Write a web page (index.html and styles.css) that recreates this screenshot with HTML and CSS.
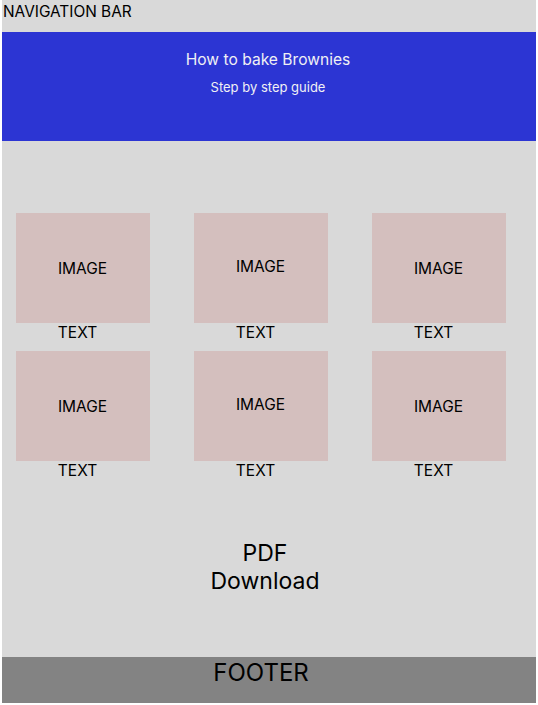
FILE: index.html
```html
<!DOCTYPE html>
<html lang="en">
<head>
<meta charset="utf-8">
<title>How to bake Brownies</title>
<link rel="stylesheet" href="styles.css">
</head>
<body>
<div class="frame">
  <nav class="nav">NAVIGATION BAR</nav>
  <header class="hero">
    <h1 class="hero-title">How to bake Brownies</h1>
    <p class="hero-sub">Step by step guide</p>
  </header>
  <main class="main">
    <div class="grid">
      <div class="cell"><div class="img">IMAGE</div><div class="label">TEXT</div></div>
      <div class="cell"><div class="img img-up">IMAGE</div><div class="label">TEXT</div></div>
      <div class="cell"><div class="img">IMAGE</div><div class="label">TEXT</div></div>
      <div class="cell"><div class="img">IMAGE</div><div class="label">TEXT</div></div>
      <div class="cell"><div class="img img-up">IMAGE</div><div class="label">TEXT</div></div>
      <div class="cell"><div class="img">IMAGE</div><div class="label">TEXT</div></div>
    </div>
    <div class="pdf">PDF<br>Download</div>
  </main>
  <footer class="footer">FOOTER</footer>
</div>
</body>
</html>
```
FILE: styles.css
```css
* { box-sizing: border-box; }
html, body { margin: 0; padding: 0; background: #ffffff; }
body {
  font-family: Inter, "Noto Sans", sans-serif;
  color: #000;
}
.frame {
  margin: 0 2px;
  height: 703px;
  background: #d9d9d9;
  display: flex;
  flex-direction: column;
}
.nav {
  height: 32px;
  padding: 3px 0 0 1px;
  font-size: 15.4px;
  line-height: 18px;
}
.hero {
  height: 109px;
  background: #2c35d3;
  color: #f0f0f4;
  text-align: center;
  padding-top: 18px;
  padding-right: 2px;
}
.hero-title {
  margin: 0;
  font-size: 15.6px;
  font-weight: 400;
  line-height: 20px;
}
.hero-sub {
  margin: 9px 0 0;
  font-size: 13px;
  line-height: 16px;
}
.main {
  flex: 1;
  display: flex;
  flex-direction: column;
  padding-top: 72px;
}
.grid {
  display: grid;
  grid-template-columns: repeat(3, 134px);
  column-gap: 44px;
  row-gap: 10px;
  padding-left: 14px;
}
.cell { display: flex; flex-direction: column; }
.img {
  height: 110px;
  background: #d4bfbe;
  display: flex;
  align-items: center;
  justify-content: center;
  font-size: 15.5px;
  padding-right: 1px;
}
.img-up { padding-bottom: 4px; }
.label {
  height: 18px;
  line-height: 20px;
  font-size: 15.5px;
  text-align: center;
  padding-right: 11px;
}
.pdf {
  margin-top: 60px;
  text-align: center;
  font-size: 23px;
  line-height: 28px;
  padding-right: 8px;
}
.footer {
  height: 46px;
  background: #838383;
  text-align: center;
  font-size: 24px;
  line-height: 28px;
  padding-right: 16px;
  padding-top: 2px;
}
```
